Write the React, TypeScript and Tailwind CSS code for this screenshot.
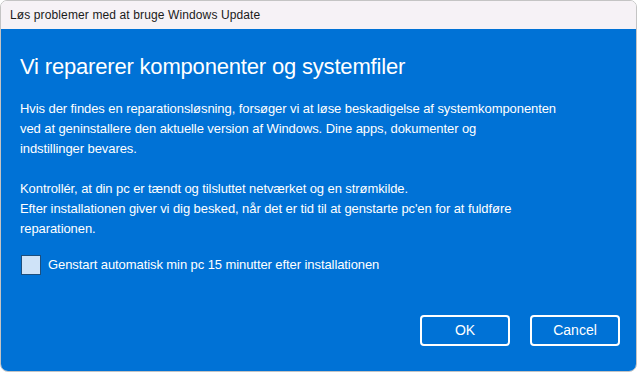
import React, { useState } from "react";

export default function App() {
    const [restart, setRestart] = useState(false);

    return (
        <div className="w-[637px] h-[372px] bg-white" style={{ fontFamily: '"Liberation Sans", Arial, sans-serif' }}>
            <div className="w-full h-full flex flex-col border border-[#c4c4c4] rounded-t-[7px] rounded-b-[8px] overflow-hidden">
                {/* title bar */}
                <div className="h-[28px] shrink-0 bg-[#f6f2f6] flex items-center px-[9px]">
                    <span className="text-[12px] tracking-[0.12px] text-[#1a1a1a]">Løs problemer med at bruge Windows Update</span>
                </div>

                {/* body */}
                <div className="flex-1 bg-[#0072d6] text-white flex flex-col px-[19px] pt-[23px]">
                    <h1 className="text-[22px] leading-[30px] font-normal tracking-[-0.18px]">Vi reparerer komponenter og systemfiler</h1>

                    <div className="mt-[17px] text-[13px] leading-[20px] tracking-[-0.08px]">
                        <p>
                            Hvis der findes en reparationsløsning, forsøger vi at løse beskadigelse af systemkomponenten
                            <br />
                            ved at geninstallere den aktuelle version af Windows. Dine apps, dokumenter og
                            <br />
                            indstillinger bevares.
                        </p>
                        <p className="mt-[20px]">
                            Kontrollér, at din pc er tændt og tilsluttet netværket og en strømkilde.
                            <br />
                            Efter installationen giver vi dig besked, når det er tid til at genstarte pc'en for at fuldføre
                            <br />
                            reparationen.
                        </p>
                    </div>

                    <label className="mt-[16px] flex items-center gap-[7px] cursor-pointer">
                        <button
                            type="button"
                            onClick={() => setRestart(!restart)}
                            className="w-[20px] h-[20px] ml-[1px] bg-[#cfe3f8] border border-[#1d4f7e] flex items-center justify-center"
                        >
                            {restart && (
                                <svg width="14" height="14" viewBox="0 0 14 14" fill="none">
                                    <path d="M2.5 7.5l3 3 6-7" stroke="#1d4f7e" strokeWidth="1.6" />
                                </svg>
                            )}
                        </button>
                        <span className="text-[13px] leading-[20px] tracking-[-0.08px]">Genstart automatisk min pc 15 minutter efter installationen</span>
                    </label>

                    <div className="mt-[40px] flex justify-end gap-[20px]">
                        <button className="w-[90px] h-[31px] border-2 border-white rounded-[4px] text-[14px] text-white">OK</button>
                        <button className="w-[90px] h-[31px] border-2 border-white rounded-[4px] text-[14px] text-white mr-[-3px]">Cancel</button>
                    </div>
                </div>
            </div>
        </div>
    );
}
